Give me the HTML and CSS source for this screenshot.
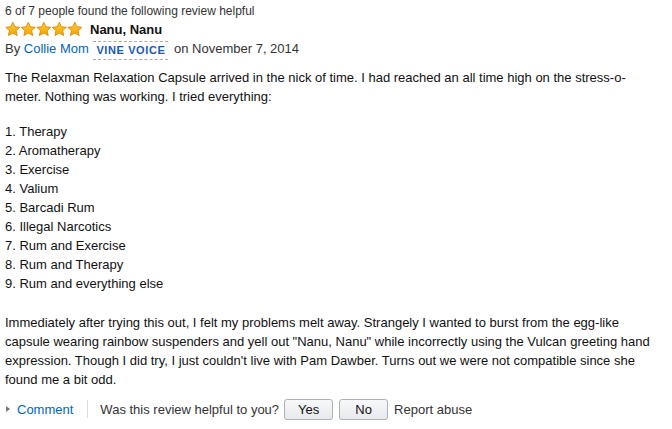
FILE: index.html
```html
<!DOCTYPE html>
<html>
<head>
<meta charset="utf-8">
<link rel="stylesheet" href="styles.css">
</head>
<body>
<div class="review">
  <div class="helpful-count">6 of 7 people found the following review helpful</div>
  <div class="title-row">
    <span class="stars">
      <svg width="78" height="16" viewBox="0 0 78 16">
        <defs>
          <linearGradient id="g" x1="0" y1="0" x2="0" y2="1">
            <stop offset="0" stop-color="#ffce3a"/>
            <stop offset="1" stop-color="#f5a300"/>
          </linearGradient>
          <path id="s" d="M7.8 0.8 L9.9 5.3 L14.8 5.8 L11.1 9.1 L12.2 14 L7.8 11.5 L3.4 14 L4.5 9.1 L0.8 5.8 L5.7 5.3 Z" fill="url(#g)" stroke="#d98a00" stroke-width="0.9" stroke-linejoin="round"/>
        </defs>
        <use href="#s" x="0" y="0.5"/>
        <use href="#s" x="15.5" y="0.5"/>
        <use href="#s" x="31" y="0.5"/>
        <use href="#s" x="46.5" y="0.5"/>
        <use href="#s" x="62" y="0.5"/>
      </svg>
    </span>
    <span class="title">Nanu, Nanu</span>
  </div>
  <div class="byline">By <a class="link" href="#">Collie Mom</a> <span class="vine">VINE VOICE</span> on November 7, 2014</div>
  <div class="text">
    <p class="intro">The Relaxman Relaxation Capsule arrived in the nick of time. I had reached an all time high on the stress-o-meter. Nothing was working. I tried everything:</p>
    <p class="list">1. Therapy<br>2. Aromatherapy<br>3. Exercise<br>4. Valium<br>5. Barcadi Rum<br>6. Illegal Narcotics<br>7. Rum and Exercise<br>8. Rum and Therapy<br>9. Rum and everything else</p>
    <p class="outro">Immediately after trying this out, I felt my problems melt away. Strangely I wanted to burst from the egg-like capsule wearing rainbow suspenders and yell out "Nanu, Nanu" while incorrectly using the Vulcan greeting hand expression. Though I did try, I just couldn't live with Pam Dawber. Turns out we were not compatible since she found me a bit odd.</p>
  </div>
  <div class="footer">
    <span class="comment"><span class="arrow"></span><a class="link" href="#">Comment</a></span>
    <span class="sep"></span>
    <span class="ask">Was this review helpful to you?</span>
    <button class="btn">Yes</button>
    <button class="btn">No</button>
    <span class="report">Report abuse</span>
  </div>
</div>
</body>
</html>
```
FILE: styles.css
```css
html, body {
  margin: 0;
  padding: 0;
  background: #fff;
}
body {
  font-family: "Liberation Sans", Arial, sans-serif;
  font-size: 13px;
  color: #111;
}
.review {
  padding: 3px 0 0 5px;
  width: 650px;
}
.helpful-count {
  font-size: 12px;
  line-height: 16px;
  color: #333;
}
.title-row {
  display: flex;
  align-items: center;
  height: 20px;
}
.stars {
  display: flex;
  width: 85px;
}
.stars svg { display: block; }
.title {
  font-weight: bold;
  font-size: 13px;
}
.byline {
  line-height: 20px;
  color: #333;
}
.link {
  color: #0066c0;
  text-decoration: none;
}
.vine {
  display: inline-block;
  font-size: 11px;
  font-weight: bold;
  color: #1a58b5;
  letter-spacing: 0.6px;
  line-height: 13px;
  padding: 2px 3px;
  border-top: 1px dashed #aaa;
  border-bottom: 1px dashed #aaa;
  margin: 0 2px 0 1px;
  vertical-align: -1px;
}
.text {
  margin-top: 8px;
  line-height: 19px;
  color: #111;
}
.text p {
  margin: 0;
}
.text .intro {
  margin-bottom: 16px;
}
.text .list {
  margin-bottom: 20px;
}
.footer {
  display: flex;
  align-items: center;
  margin-top: 8px;
  height: 24px;
  color: #333;
}
.comment {
  display: flex;
  align-items: center;
}
.arrow {
  width: 0;
  height: 0;
  border-left: 4px solid #777;
  border-top: 3.5px solid transparent;
  border-bottom: 3.5px solid transparent;
  margin: 0 7px 0 1px;
}
.sep {
  width: 1px;
  height: 18px;
  background: #ddd;
  margin: 0 12px 0 14px;
}
.btn {
  font-family: "Liberation Sans", Arial, sans-serif;
  font-size: 13px;
  color: #111;
  width: 49px;
  height: 21px;
  padding: 0;
  border: 1px solid #adb1b8;
  border-radius: 3px;
  background: linear-gradient(#f7f8fa, #e7e9ec);
  margin-left: 5px;
}
.btn + .btn {
  margin-left: 6px;
}
.report {
  margin-left: 6px;
}
```
